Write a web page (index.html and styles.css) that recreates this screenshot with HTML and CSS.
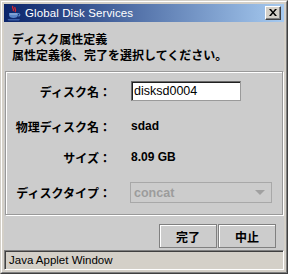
FILE: index.html
```html
<!DOCTYPE html>
<html lang="ja">
<head>
<meta charset="utf-8">
<title>Global Disk Services</title>
<link rel="stylesheet" href="styles.css">
</head>
<body>
<div class="window">
  <div class="frame">
    <div class="titlebar">
      <svg class="java-icon" width="16" height="16" viewBox="0 0 16 16">
        <path d="M7 1 C5 3 9 4 7 6 M9 2 C8 4 11 4 9 7" fill="none" stroke="#e0262b" stroke-width="1.3"/>
        <path d="M3 8 H12 V10 C12 12 10 13 7.5 13 C5 13 3 12 3 10 Z" fill="#5a86c8"/>
        <path d="M12 8.5 C14.5 8.5 14.5 11 12 11" fill="none" stroke="#5a86c8" stroke-width="1.2"/>
        <path d="M1.5 14 H14 L13 15.5 H2.5 Z" fill="#3b5fa8"/>
        <path d="M4 9 H11" stroke="#b9cde8" stroke-width="0.8"/>
      </svg>
      <span class="title">Global Disk Services</span>
      <div class="close">
        <svg width="8" height="7" viewBox="0 0 8 7">
          <path d="M0 0 L2 0 L4 2.5 L6 0 L8 0 L5 3.5 L8 7 L6 7 L4 4.5 L2 7 L0 7 L3 3.5 Z" fill="#000"/>
        </svg>
      </div>
    </div>
    <div class="content">
      <div class="header">
        <div class="line">ディスク属性定義</div>
        <div class="line">属性定義後、完了を選択してください。</div>
      </div>
      <div class="panel">
        <div class="row row-name">
          <span class="label">ディスク名：</span>
          <div class="field">disksd0004</div>
        </div>
        <div class="row row-phys">
          <span class="label">物理ディスク名：</span>
          <span class="value">sdad</span>
        </div>
        <div class="row row-size">
          <span class="label">サイズ：</span>
          <span class="value">8.09 GB</span>
        </div>
        <div class="row row-type">
          <span class="label">ディスクタイプ：</span>
          <div class="combo">
            <span class="combo-text">concat</span>
            <svg class="combo-arrow" width="10" height="5" viewBox="0 0 10 5"><path d="M0 0 H10 L5 5 Z" fill="#a0a0a0"/></svg>
          </div>
        </div>
      </div>
      <div class="buttons">
        <div class="btn">完了</div>
        <div class="btn">中止</div>
      </div>
    </div>
    <div class="status">Java Applet Window</div>
  </div>
</div>
</body>
</html>
```

FILE: styles.css
```css
html, body {
  margin: 0;
  padding: 0;
  background: #d4d0c8;
}

.window {
  width: 288px;
  height: 274px;
  box-sizing: border-box;
  border: 1px solid;
  border-color: #d4d0c8 #404040 #404040 #d4d0c8;
}

.frame {
  height: 100%;
  box-sizing: border-box;
  border: 1px solid;
  border-color: #ffffff #808080 #808080 #ffffff;
  padding: 2px;
  background: #d4d0c8;
  display: flex;
  flex-direction: column;
}

.titlebar {
  height: 18px;
  flex: none;
  display: flex;
  align-items: center;
  background: linear-gradient(to right, #0a246a, #a6caf0);
  color: #ffffff;
  font-family: "Liberation Sans", Arial, sans-serif;
  font-size: 11.5px;
}

.java-icon {
  margin-left: 2px;
  flex: none;
}

.title {
  margin-left: 3px;
  flex: 1;
  letter-spacing: 0.1px;
}

.close {
  width: 16px;
  height: 14px;
  box-sizing: border-box;
  margin-right: 3px;
  background: #d4d0c8;
  border: 1px solid;
  border-color: #ffffff #404040 #404040 #ffffff;
  box-shadow: inset -1px -1px 0 #808080;
  display: flex;
  align-items: center;
  justify-content: center;
  padding: 0 1px 1px 0;
}

.close svg {
  display: block;
}

.content {
  flex: 1;
  background: #cccccc;
  display: flex;
  flex-direction: column;
  font-family: "Noto Sans CJK JP", sans-serif;
  font-weight: bold;
  font-size: 12px;
  color: #000000;
}

.header {
  padding: 9px 0 0 8px;
}

.header .line {
  height: 16px;
  line-height: 16px;
  white-space: nowrap;
}

.panel {
  margin: 8px 1px 0 1px;
  padding: 9px 0 11px 0;
  border: 1px solid #999999;
  box-shadow: inset 1px 1px 0 #ffffff, 1px 1px 0 #ffffff;
  display: flex;
  flex-direction: column;
}

.row {
  display: flex;
  align-items: center;
  height: 20px;
}

.row-phys { margin-top: 15px; }
.row-size { margin-top: 11px; }
.row-type { margin-top: 15px; height: 21px; }

.label {
  width: 105px;
  flex: none;
  text-align: right;
  white-space: nowrap;
  margin-right: 20px;
}

.field {
  width: 110px;
  height: 20px;
  box-sizing: border-box;
  background: #ffffff;
  border: 1px solid;
  border-color: #6a6a6a #9a9a9a #9a9a9a #6a6a6a;
  box-shadow: inset 1px 1px 0 #202020;
  padding-left: 2px;
  font-family: "Liberation Sans", Arial, sans-serif;
  font-weight: normal;
  font-size: 12.5px;
  line-height: 18px;
}

.value {
  font-family: "Liberation Sans", Arial, sans-serif;
  font-weight: bold;
  font-size: 12px;
}

.combo {
  width: 142px;
  height: 21px;
  box-sizing: border-box;
  margin-left: -1px;
  border: 1px solid #a8a8a8;
  display: flex;
  align-items: center;
  padding: 0 6px 0 3px;
}

.combo-text {
  flex: 1;
  color: #9c9c9c;
  font-family: "Liberation Sans", Arial, sans-serif;
  font-weight: bold;
  font-size: 12.5px;
}

.combo-arrow {
  flex: none;
}

.buttons {
  display: flex;
  justify-content: flex-end;
  gap: 1px;
  margin: 9px 8px 0 0;
}

.btn {
  width: 58px;
  height: 24px;
  box-sizing: border-box;
  border: 1px solid #808080;
  box-shadow: inset 1px 1px 0 #ffffff;
  display: flex;
  align-items: center;
  justify-content: center;
  font-size: 12px;
}

.status {
  height: 20px;
  flex: none;
  box-sizing: border-box;
  background: #d4d0c8;
  border: 1px solid;
  border-color: #808080 #ffffff #ffffff #808080;
  box-shadow: inset 1px 1px 0 #404040;
  padding-left: 4px;
  font-family: "Liberation Sans", Arial, sans-serif;
  font-size: 11.5px;
  line-height: 18px;
  color: #000000;
}
```
